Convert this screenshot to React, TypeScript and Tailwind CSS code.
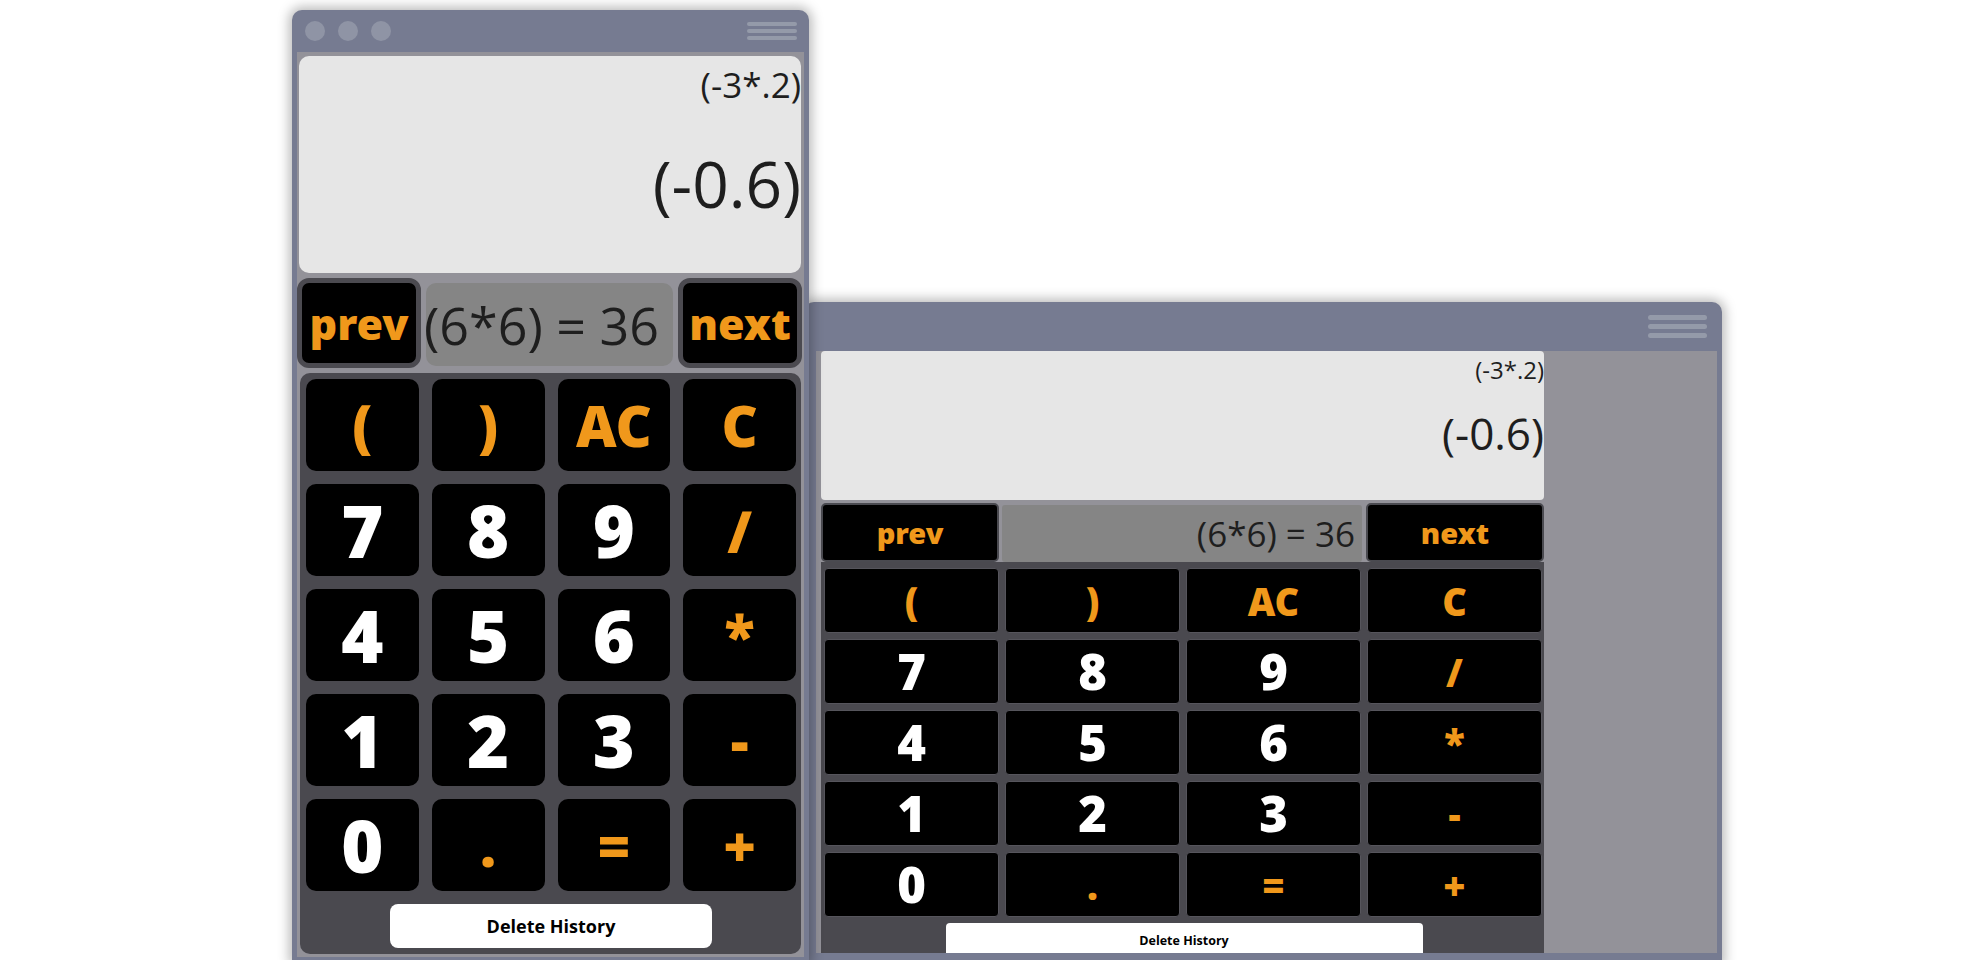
import React from "react";

const ROWS: string[][] = [
  ["(", ")", "AC", "C"],
  ["7", "8", "9", "/"],
  ["4", "5", "6", "*"],
  ["1", "2", "3", "-"],
  ["0", ".", "=", "+"],
];

const isDigit = (k: string) => /^[0-9]$/.test(k);

function Dots() {
  return (
    <div className="flex gap-[13px]">
      <div className="w-[20px] h-[20px] rounded-full bg-[#8f94a5]" />
      <div className="w-[20px] h-[20px] rounded-full bg-[#8f94a5]" />
      <div className="w-[20px] h-[20px] rounded-full bg-[#8f94a5]" />
    </div>
  );
}

function LeftWindow() {
  return (
    <div className="absolute left-[292px] top-[10px] z-10 w-[517px] h-[952px] bg-[#767b91] rounded-t-[10px] shadow-[0_0_12px_3px_rgba(0,0,0,0.28)] flex flex-col">
      <div className="h-[42px] flex items-center justify-between pl-[13px] pr-[12px]">
        <Dots />
        <div className="flex flex-col gap-[3px] w-[50px]">
          <div className="h-[4px] rounded-full bg-[#949aa9]" />
          <div className="h-[4px] rounded-full bg-[#949aa9]" />
          <div className="h-[4px] rounded-full bg-[#949aa9]" />
        </div>
      </div>
      <div className="mx-[5px] h-[905px] bg-[#939299] flex flex-col pt-[4px] pb-[3px] overflow-hidden">
        <div className="ml-[2px] mr-[3px] h-[217px] shrink-0 rounded-[10px] bg-[#e6e6e6] flex flex-col items-end text-[#1e1e1e]">
          <div className="text-[35px] leading-none mt-[11px] whitespace-nowrap">(-3*.2)</div>
          <div className="text-[64px] leading-none mt-[50px] whitespace-nowrap">(-0.6)</div>
        </div>
        <div className="mt-[5px] h-[90px] shrink-0 flex gap-[5px] mr-[2px]">
          <div className="w-[124px] border-[5px] border-[#4b4a50] rounded-[12px] bg-black flex items-center justify-center text-[#f0981b] text-[43px] font-black leading-none font-['Noto_Sans',sans-serif]">
            prev
          </div>
          <div className="flex-1 mt-[5px] mb-[2px] bg-[#858585] rounded-[10px] flex items-center text-[52px] leading-none text-[#1e1e1e] whitespace-nowrap">
            <span className="-ml-[2px]">(6*6) = 36</span>
          </div>
          <div className="w-[124px] border-[5px] border-[#4b4a50] rounded-[12px] bg-black flex items-center justify-center text-[#f0981b] text-[43px] font-black leading-none font-['Noto_Sans',sans-serif]">
            next
          </div>
        </div>
        <div className="mt-[5px] mx-[3px] h-[581px] shrink-0 bg-[#4a494f] rounded-[10px] pt-[6px] pl-[6px] pr-[5px] flex flex-col items-center">
          <div className="grid grid-cols-4 gap-[13px] w-full auto-rows-[92px]">
            {ROWS.flat().map((k) => (
              <div
                key={k}
                className={
                  isDigit(k)
                    ? "bg-black rounded-[10px] flex items-center justify-center text-white text-[72px] font-black leading-none font-['Noto_Sans',sans-serif]"
                    : "bg-black rounded-[10px] flex items-center justify-center text-[#f0981b] text-[56px] font-black leading-none font-['Noto_Sans',sans-serif]"
                }
              >
                {k}
              </div>
            ))}
          </div>
          <div className="mt-[13px] w-[322px] h-[44px] bg-white rounded-[8px] flex items-center justify-center text-[18px] font-bold text-black">
            Delete History
          </div>
        </div>
      </div>
    </div>
  );
}

function RightWindow() {
  return (
    <div className="absolute left-[804px] top-[302px] w-[918px] h-[662px] bg-[#767b91] rounded-t-[10px] shadow-[0_0_12px_3px_rgba(0,0,0,0.28)] flex flex-col">
      <div className="h-[49px] flex items-center justify-end pr-[15px]">
        <div className="flex flex-col gap-[4px] w-[59px]">
          <div className="h-[5px] rounded-full bg-[#949aa9]" />
          <div className="h-[5px] rounded-full bg-[#949aa9]" />
          <div className="h-[5px] rounded-full bg-[#949aa9]" />
        </div>
      </div>
      <div className="ml-[12px] mr-[5px] h-[602px] bg-[#939299] overflow-hidden pl-[5px]">
        <div className="w-[723px] h-full flex flex-col">
          <div className="h-[149px] shrink-0 rounded-[4px] bg-[#e6e6e6] flex flex-col items-end text-[#1e1e1e]">
            <div className="text-[24px] leading-none mt-[7px] whitespace-nowrap">(-3*.2)</div>
            <div className="text-[44px] leading-none mt-[29px] whitespace-nowrap">(-0.6)</div>
          </div>
          <div className="mt-[3px] h-[59px] shrink-0 flex">
            <div className="w-[178px] border-[2px] border-[#4a4a50] rounded-[5px] bg-black flex items-center justify-center text-[#f0981b] text-[29px] font-black leading-none font-['Noto_Sans',sans-serif]">
              prev
            </div>
            <div className="ml-[3px] w-[360px] mt-[2px] bg-[#858585] rounded-[3px] flex items-center justify-end pr-[7px] text-[35px] leading-none text-[#1e1e1e] whitespace-nowrap">
              (6*6) = 36
            </div>
            <div className="ml-[4px] w-[178px] border-[2px] border-[#4a4a50] rounded-[5px] bg-black flex items-center justify-center text-[#f0981b] text-[29px] font-black leading-none font-['Noto_Sans',sans-serif]">
              next
            </div>
          </div>
          <div className="flex-1 bg-[#4a494f] pt-[6px] pl-[3px] flex flex-col items-center">
            <div className="grid grid-cols-[repeat(4,175px)] gap-[6px] auto-rows-[65px] self-start">
              {ROWS.flat().map((k) => (
                <div
                  key={k}
                  className={
                    isDigit(k)
                      ? "bg-black rounded-[4px] border border-[#56555c] flex items-center justify-center text-white text-[49px] font-black leading-none font-['Noto_Sans',sans-serif]"
                      : "bg-black rounded-[4px] border border-[#56555c] flex items-center justify-center text-[#f0981b] text-[38px] font-black leading-none font-['Noto_Sans',sans-serif]"
                  }
                >
                  {k}
                </div>
              ))}
            </div>
            <div className="mt-[6px] w-[477px] h-[36px] shrink-0 bg-white rounded-[4px] flex items-center justify-center text-[12.5px] font-bold text-black">
              Delete History
            </div>
          </div>
        </div>
      </div>
    </div>
  );
}

export default function App() {
  return (
    <div className="relative w-[1980px] h-[960px] overflow-hidden bg-white font-['Open_Sans',sans-serif]">
      <RightWindow />
      <LeftWindow />
    </div>
  );
}
